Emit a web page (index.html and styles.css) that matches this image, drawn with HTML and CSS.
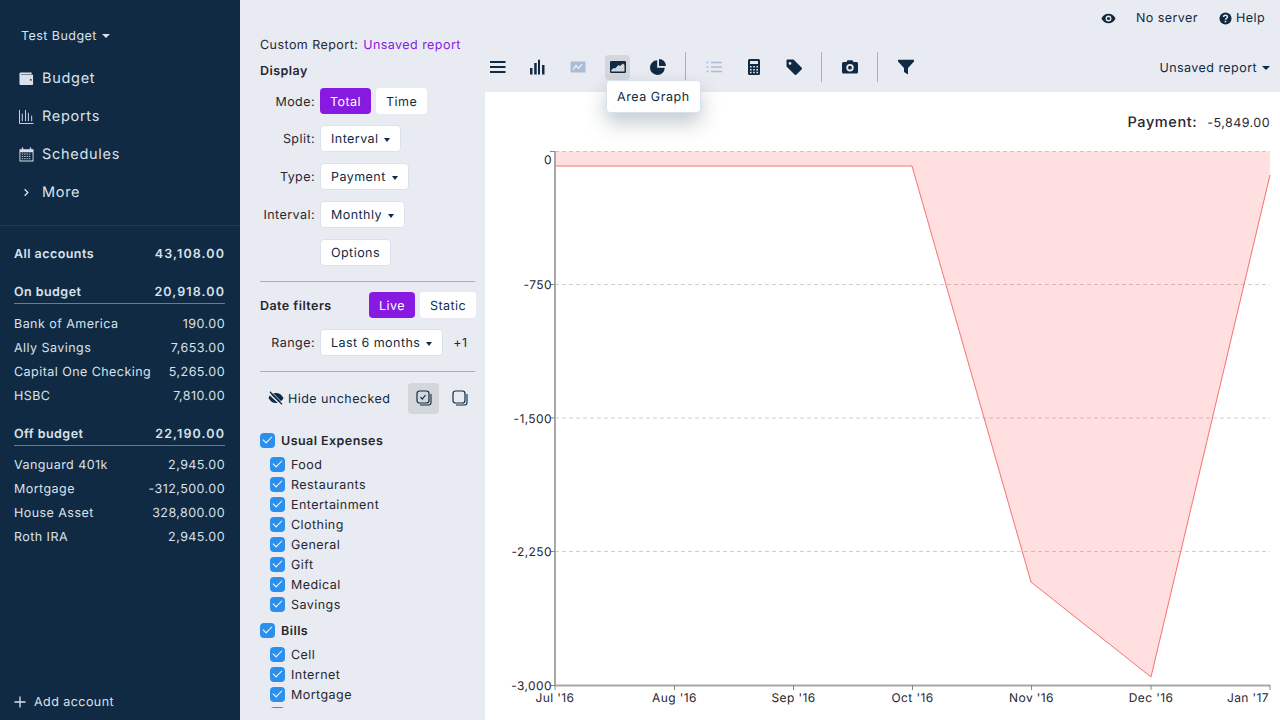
FILE: index.html
```html
<!DOCTYPE html>
<html lang="en">
<head>
    <meta charset="UTF-8">
    <title>Custom Report</title>
    <link rel="stylesheet" href="styles.css">
</head>
<body>

<div class="app">
    <!-- Sidebar -->
    <aside class="sidebar">
        <div class="budget-name">Test Budget <span class="caret caret-light"></span></div>
        <nav class="nav">
            <div class="nav-item">
                <svg class="nav-icon" viewBox="0 0 16 16"><path fill="currentColor" d="M2 1.500h11.500v2H2.200v.5H15v10.200a.8.8 0 0 1-.8.8H1.800A1.300 1.300 0 0 1 .5 13.700V3A1.500 1.500 0 0 1 2 1.500z"/><circle cx="12.600" cy="9.400" r="1" fill="#102a43"/></svg>
                Budget
            </div>
            <div class="nav-item">
                <svg class="nav-icon" viewBox="0 0 16 16"><path fill="none" stroke="currentColor" d="M.5 1v14.500h15M3.500 5v8M7 1v12M10 4v9M13.500 7v6"/></svg>
                Reports
            </div>
            <div class="nav-item">
                <svg class="nav-icon" viewBox="0 0 16 16"><path fill="currentColor" fill-rule="evenodd" d="M3 .5h1.500v2h7v-2H13v2h2.500v13H.5v-13H3zM1.500 5.500v9h13v-9z"/><path fill="none" stroke="currentColor" stroke-dasharray="1.500 1" d="M3 7.500h10M3 10h10M3 12.500h10"/></svg>
                Schedules
            </div>
            <div class="nav-item">
                <svg class="nav-icon" viewBox="0 0 16 16"><path fill="none" stroke="currentColor" stroke-width="1.400" d="M6 4.500 9.500 8 6 11.500"/></svg>
                More
            </div>
        </nav>
        <div class="accounts">
            <div class="account-row account-all"><span>All accounts</span><span class="account-sum">43,108.00</span></div>
            <div class="account-row account-head"><span>On budget</span><span class="account-sum">20,918.00</span></div>
            <div class="account-row"><span>Bank of America</span><span>190.00</span></div>
            <div class="account-row"><span>Ally Savings</span><span>7,653.00</span></div>
            <div class="account-row"><span>Capital One Checking</span><span>5,265.00</span></div>
            <div class="account-row"><span>HSBC</span><span>7,810.00</span></div>
            <div class="account-row account-head account-off"><span>Off budget</span><span class="account-sum">22,190.00</span></div>
            <div class="account-row"><span>Vanguard 401k</span><span>2,945.00</span></div>
            <div class="account-row"><span>Mortgage</span><span>-312,500.00</span></div>
            <div class="account-row"><span>House Asset</span><span>328,800.00</span></div>
            <div class="account-row"><span>Roth IRA</span><span>2,945.00</span></div>
        </div>
        <div class="add-account">
            <svg class="add-icon" viewBox="0 0 12 12"><path fill="none" stroke="currentColor" stroke-width="1.300" d="M6 .5v11M.5 6h11"/></svg>
            Add account
        </div>
    </aside>

    <main class="main">
        <!-- Top bar -->
        <header class="topbar">
            <svg class="top-icon eye-icon" viewBox="0 0 16 12"><path fill="currentColor" fill-rule="evenodd" d="M8 .8c3.400 0 6.200 2 7.700 5.200C14.200 9.200 11.400 11.200 8 11.200S1.800 9.200.3 6C1.800 2.800 4.600.8 8 .8zM8 2.800a3.200 3.200 0 1 0 0 6.400 3.200 3.200 0 0 0 0-6.400z"/><circle cx="8" cy="6" r="1.700" fill="currentColor"/></svg>
            <span class="top-text server-text">No server</span>
            <svg class="top-icon help-icon" viewBox="0 0 14 14"><circle cx="7" cy="7" r="6.500" fill="currentColor"/><path fill="none" stroke="#e8ebf1" stroke-width="1.600" d="M4.900 5.400c0-1.300 1-2 2.100-2s2.100.7 2.100 1.900c0 1.600-2.100 1.500-2.100 3.100"/><rect x="6.100" y="9.400" width="1.700" height="1.700" fill="#e8ebf1"/></svg>
            <span class="top-text">Help</span>
        </header>

        <div class="content">
            <!-- Filters panel -->
            <section class="panel">
                <div class="report-title">Custom Report: <span class="report-name">Unsaved report</span></div>
                <div class="section-title">Display</div>

                <div class="field field-mode">
                    <label class="field-label">Mode:</label>
                    <button class="btn btn-primary">Total</button>
                    <button class="btn btn-plain">Time</button>
                </div>
                <div class="field">
                    <label class="field-label">Split:</label>
                    <button class="btn btn-select">Interval <span class="caret"></span></button>
                </div>
                <div class="field">
                    <label class="field-label">Type:</label>
                    <button class="btn btn-select">Payment <span class="caret"></span></button>
                </div>
                <div class="field">
                    <label class="field-label">Interval:</label>
                    <button class="btn btn-select">Monthly <span class="caret"></span></button>
                </div>
                <div class="field">
                    <label class="field-label"></label>
                    <button class="btn btn-select">Options</button>
                </div>

                <hr class="panel-rule rule-display">

                <div class="date-head">
                    <span class="date-title">Date filters</span>
                    <button class="btn btn-primary btn-live">Live</button>
                    <button class="btn btn-plain">Static</button>
                </div>
                <div class="field range-field">
                    <label class="field-label">Range:</label>
                    <button class="btn btn-select">Last 6 months <span class="caret"></span></button>
                    <span class="range-step">+1</span>
                </div>

                <hr class="panel-rule rule-date">

                <div class="check-tools">
                    <svg class="hide-icon" viewBox="0 0 16 14"><path fill="currentColor" d="M8 2c3.200 0 6 1.900 7.500 5-1 2-2.400 3.500-4.300 4.300L3 3.600C4.400 2.600 6.100 2 8 2zM1.800 4.500l8 7.400c-.6.100-1.200.1-1.800.1-3.200 0-6-1.900-7.500-5 .3-.9.800-1.700 1.300-2.500z"/><path stroke="currentColor" stroke-width="1.400" d="M2 .8l12 12.400"/><path stroke="#e8ebf1" stroke-width=".8" d="M3.300.5l12 12.400"/></svg>
                    <span class="hide-text">Hide unchecked</span>
                    <span class="tool-btn tool-active">
                        <svg viewBox="0 0 16 16"><path fill="none" stroke="currentColor" stroke-width="1.100" d="M15 4v8.500a2.500 2.500 0 0 1-2.500 2.500H4"/><rect x="1" y="1" width="12" height="12" rx="2.500" fill="none" stroke="currentColor" stroke-width="1.200"/><path fill="none" stroke="currentColor" stroke-width="1.200" d="M4.500 7.200 6.300 9l3.200-4"/></svg>
                    </span>
                    <span class="tool-btn">
                        <svg viewBox="0 0 16 16"><path fill="none" stroke="currentColor" stroke-width="1.100" d="M15 4v8.500a2.500 2.500 0 0 1-2.500 2.500H4"/><rect x="1" y="1" width="12" height="12" rx="2.500" fill="none" stroke="currentColor" stroke-width="1.200"/></svg>
                    </span>
                </div>

                <div class="check-group">
                    <div class="check-row check-parent"><span class="check"></span>Usual Expenses</div>
                    <div class="check-row"><span class="check"></span>Food</div>
                    <div class="check-row"><span class="check"></span>Restaurants</div>
                    <div class="check-row"><span class="check"></span>Entertainment</div>
                    <div class="check-row"><span class="check"></span>Clothing</div>
                    <div class="check-row"><span class="check"></span>General</div>
                    <div class="check-row"><span class="check"></span>Gift</div>
                    <div class="check-row"><span class="check"></span>Medical</div>
                    <div class="check-row"><span class="check"></span>Savings</div>
                </div>
                <div class="check-group">
                    <div class="check-row check-parent"><span class="check"></span>Bills</div>
                    <div class="check-row"><span class="check"></span>Cell</div>
                    <div class="check-row"><span class="check"></span>Internet</div>
                    <div class="check-row"><span class="check"></span>Mortgage</div>
                    <div class="check-row"><span class="check"></span></div>
                </div>
            </section>

            <section class="report">
                <!-- Toolbar -->
                <div class="toolbar">
                    <span class="tb-btn">
                        <svg viewBox="0 0 16 16"><path fill="none" stroke="currentColor" stroke-width="1.800" d="M0 3h15.500M0 8h15.500M0 13h15.500"/></svg>
                    </span>
                    <span class="tb-btn">
                        <svg viewBox="0 0 16 16"><path fill="currentColor" d="M0 9h2.500v6.500H0zM4.200 4h2.500v11.500H4.200zM8 .8h2v14.700H8zM12 6h2.500v9.500H12z"/></svg>
                    </span>
                    <span class="tb-btn tb-off">
                        <svg viewBox="0 0 16 16"><path fill="currentColor" d="M1.500 2.500h13a1 1 0 0 1 1 1v10h-14a1 1 0 0 1-1-1v-9a1 1 0 0 1 1-1z"/><path fill="none" stroke="#e8ebf1" stroke-width="1.400" d="M3 10.500 6 6.500l2.500 3 3.500-4.500"/></svg>
                    </span>
                    <span class="tb-btn tb-active">
                        <svg viewBox="0 0 16 16"><path fill="currentColor" fill-rule="evenodd" d="M1.300 2h13.400A1.300 1.300 0 0 1 16 3.300v9.400a1.300 1.300 0 0 1-1.300 1.300H1.300A1.300 1.300 0 0 1 0 12.700V3.300A1.300 1.300 0 0 1 1.300 2zM1.500 12.500h13V6l-1.500-1.500-3 2.500-1.500-1-3.500 3.500-1.500-.5-2.500 2.500z"/></svg>
                    </span>
                    <span class="tb-btn">
                        <svg viewBox="0 0 16 16"><path fill="currentColor" d="M7.200 1.200v7.600h7.600A7.400 7.400 0 1 1 7.200 1.200z"/><path fill="currentColor" d="M9 0a7 7 0 0 1 7 7H9z"/></svg>
                    </span>
                    <span class="tb-sep"></span>
                    <span class="tb-btn tb-off">
                        <svg viewBox="0 0 16 16"><path fill="none" stroke="currentColor" stroke-width="1.500" d="M5 3.500h11M5 8h11M5 12.500h11M.5 3.500h2M.5 8h2M.5 12.500h2"/></svg>
                    </span>
                    <span class="tb-btn tb-wide">
                        <svg viewBox="0 0 16 16"><path fill="currentColor" fill-rule="evenodd" d="M3.500 0h9A1.500 1.500 0 0 1 14 1.500v13a1.500 1.500 0 0 1-1.500 1.500h-9A1.500 1.500 0 0 1 2 14.500v-13A1.500 1.500 0 0 1 3.500 0zM4 2v3h8V2zM4 7v1.600h1.600V7zM7.200 7v1.600h1.600V7zM10.400 7v1.600H12V7zM4 10v1.600h1.600V10zM7.200 10v1.600h1.600V10zM10.400 10v1.600H12V10zM4 12.800v1.400h1.600v-1.400zM7.200 12.800v1.400h1.600v-1.400zM10.400 12.800v1.400H12v-1.400z"/></svg>
                    </span>
                    <span class="tb-btn">
                        <svg viewBox="0 0 16 16"><path fill="currentColor" fill-rule="evenodd" d="M1.500 .5h6l8 8a1.400 1.400 0 0 1 0 2l-5 5a1.400 1.400 0 0 1-2 0l-8-8v-6a1 1 0 0 1 1-1zM4 3a1.400 1.400 0 1 0 0 2.800A1.400 1.400 0 0 0 4 3z"/></svg>
                    </span>
                    <span class="tb-sep"></span>
                    <span class="tb-btn">
                        <svg viewBox="0 0 16 16"><path fill="currentColor" fill-rule="evenodd" d="M1.500 3H4.500l1-1.800h5L11.500 3h3A1.500 1.500 0 0 1 16 4.500v8.500a1.500 1.500 0 0 1-1.500 1.500h-13A1.500 1.500 0 0 1 0 13V4.500A1.500 1.500 0 0 1 1.500 3zM8 5a3.700 3.700 0 1 0 0 7.400A3.700 3.700 0 0 0 8 5zM8 6.800a1.900 1.900 0 1 1 0 3.800 1.900 1.900 0 0 1 0-3.800z"/></svg>
                    </span>
                    <span class="tb-sep"></span>
                    <span class="tb-btn">
                        <svg viewBox="0 0 16 16"><path fill="currentColor" d="M0 .8h16v1.700L10 9v6.500L6 13V9L0 2.500z"/></svg>
                    </span>
                    <span class="saved-name">Unsaved report <span class="caret"></span></span>
                    <div class="tooltip">Area Graph</div>
                </div>

                <!-- Chart -->
                <div class="chart-card">
                    <div class="chart-total"><span class="total-label">Payment:</span><span class="total-value">-5,849.00</span></div>
                    <svg class="chart" viewBox="0 0 795 628" width="795" height="628">
                        <g class="grid">
                            <line x1="70" y1="59.500" x2="785" y2="59.500"/>
                            <line x1="70" y1="192.500" x2="785" y2="192.500"/>
                            <line x1="70" y1="326" x2="785" y2="326"/>
                            <line x1="70" y1="459.500" x2="785" y2="459.500"/>
                        </g>
                        <path class="area" d="M70 59.500H785V83L666 585 546 490 427 74H70z"/>
                        <path class="area-line" d="M70 74H427L546 490 666 585 785 83"/>
                        <path class="axis" d="M70 59V593.500H785"/>
                        <path class="tick" d="M70 593v5M189.500 593v5M308.500 593v5M427.500 593v5M546.500 593v5M666 593v5M785 593v5M65 593.500h5M65 459.500h5M65 326h5M65 192.500h5M65 59.500h5"/>
                        <g class="y-labels">
                            <text x="67" y="72">0</text>
                            <text x="67" y="197">-750</text>
                            <text x="67" y="331">-1,500</text>
                            <text x="67" y="464">-2,250</text>
                            <text x="67" y="598">-3,000</text>
                        </g>
                        <g class="x-labels">
                            <text x="70" y="610">Jul '16</text>
                            <text x="189.500" y="610">Aug '16</text>
                            <text x="308.500" y="610">Sep '16</text>
                            <text x="427.500" y="610">Oct '16</text>
                            <text x="546.500" y="610">Nov '16</text>
                            <text x="666" y="610">Dec '16</text>
                            <text x="763" y="610">Jan '17</text>
                        </g>
                    </svg>
                </div>
            </section>
        </div>
    </main>
</div>

</body>
</html>
```

FILE: styles.css
```css
* {
    box-sizing: border-box;
}

body {
    margin: 0;
    font-family: Inter, "Noto Sans", sans-serif;
    font-size: 12.500px;
    letter-spacing: 0.45px;
    text-rendering: geometricPrecision;
    color: #272630;
    background-color: #e8ebf1;
    overflow: hidden;
}

.app {
    display: flex;
    width: 1280px;
    height: 720px;
    overflow: hidden;
}

/* Carets */
.caret {
    display: inline-block;
    width: 0;
    height: 0;
    margin-left: 1px;
    vertical-align: 2px;
    border-left: 4.500px solid transparent;
    border-right: 4.500px solid transparent;
    border-top: 4.500px solid #102a43;
}

.caret-light {
    border-top-color: #d9e2ec;
}

/* Sidebar */
.sidebar {
    display: flex;
    flex-direction: column;
    flex: 0 0 240px;
    height: 720px;
    background-color: #102a43;
    color: #d9e2ec;
}

.budget-name {
    height: 58px;
    padding: 29px 0 0 21px;
    line-height: 16px;
}

.nav-item {
    display: flex;
    align-items: center;
    height: 38px;
    padding: 2px 0 0 19px;
    font-size: 14.500px;
    letter-spacing: 0.7px;
}

.nav-icon {
    width: 15px;
    height: 15px;
    margin-right: 8px;
}

.nav {
    padding-bottom: 15px;
    border-bottom: 1px solid #243b53;
}

.accounts {
    flex: 1;
    padding: 16px 15px 0 14px;
}

.account-row {
    display: flex;
    justify-content: space-between;
    height: 24px;
    line-height: 26px;
}

.account-all {
    margin-bottom: 14px;
    font-weight: 600;
}

.account-head {
    margin-bottom: 8px;
    border-bottom: 1px solid #627d98;
    font-weight: 600;
}

.account-sum {
    letter-spacing: 1.100px;
}

.account-off {
    margin-top: 14px;
    margin-bottom: 7px;
}

.add-account {
    display: flex;
    align-items: center;
    height: 38px;
    padding: 2px 0 0 14px;
}

.add-icon {
    width: 12px;
    height: 12px;
    margin-right: 8px;
}

/* Main area */
.main {
    display: flex;
    flex-direction: column;
    flex: 1;
    min-width: 0;
}

.topbar {
    display: flex;
    align-items: center;
    justify-content: flex-end;
    flex: 0 0 36px;
    padding-right: 15px;
    color: #102a43;
}

.top-text {
    padding-top: 1px;
}

.top-icon {
    display: block;
}

.eye-icon {
    width: 15px;
    height: 11px;
    margin-right: 20px;
}

.help-icon {
    width: 13px;
    height: 13px;
    margin-right: 4px;
}

.server-text {
    margin-right: 21px;
}

.content {
    display: flex;
    flex: 1;
    min-height: 0;
}

/* Filters panel, its list is cut at 708 */
.panel {
    flex: 0 0 245px;
    height: 672px;
    padding: 0 10px 0 20px;
    overflow: hidden;
}

.report-title {
    height: 18px;
    line-height: 19px;
}

.report-name {
    margin-left: 1px;
    color: #8719e0;
}

.section-title {
    height: 28px;
    line-height: 35px;
    font-weight: 600;
}

.field {
    display: flex;
    align-items: center;
    height: 38px;
}

.field-mode {
    margin-bottom: -1px;
}

.field-label {
    flex: 0 0 55px;
    margin-right: 5px;
    padding-top: 2px;
    text-align: right;
}

.btn {
    height: 27px;
    padding: 2px 10px 0;
    border: 1px solid #d9e2ec;
    border-radius: 4px;
    background-color: #fff;
    color: #102a43;
    font-family: inherit;
    font-size: 12.500px;
    letter-spacing: 0.45px;
    text-rendering: geometricPrecision;
    white-space: nowrap;
}

.btn-plain {
    height: 26px;
    margin-left: 5px;
    border: none;
}

.btn-primary {
    height: 26px;
    border: none;
    background-color: #8719e0;
    color: #fff;
}

.btn-select .caret {
    margin-left: 2px;
    vertical-align: 1px;
    border-width: 4px 3.500px 0;
}

.panel-rule {
    margin: 0;
    border: none;
    border-top: 1px solid #9fb3c8;
}

.rule-display {
    margin-top: 10px;
}

.date-head {
    display: flex;
    align-items: center;
    height: 46px;
}

.date-title {
    flex: 0 0 109px;
    padding-top: 2px;
    font-weight: 600;
}

.range-field {
    height: 28px;
    margin-bottom: 15px;
}

.range-step {
    margin-left: 10px;
    padding-top: 2px;
}

.check-tools {
    display: flex;
    align-items: center;
    height: 32px;
    margin-top: 10px;
    color: #102a43;
}

.hide-icon {
    flex: 0 0 16px;
    height: 14px;
    margin-left: 8px;
    margin-right: 4px;
}

.hide-text {
    flex: 0 0 120px;
    padding-top: 2px;
    white-space: nowrap;
}

.tool-btn {
    display: flex;
    align-items: center;
    justify-content: center;
    flex: 0 0 31px;
    height: 31px;
    margin-right: 5px;
    border-radius: 4px;
}

.tool-btn svg {
    width: 16px;
    height: 16px;
}

.tool-active {
    background-color: #d3d7dc;
}

.check-group {
    margin-top: 14px;
}

.check-group + .check-group {
    margin-top: 4px;
}

.check-row {
    display: flex;
    align-items: center;
    height: 20px;
    padding: 2px 0 0 10px;
}

.check-parent {
    height: 24px;
    margin-bottom: 2px;
    padding-left: 0;
    font-weight: 600;
}

/* Blue box with a white tick */
.check {
    position: relative;
    flex: 0 0 15px;
    width: 15px;
    height: 15px;
    margin-right: 6px;
    margin-bottom: 2px;
    border-radius: 4px;
    background-color: #2b8fed;
}

.check::after {
    content: "";
    position: absolute;
    left: 3px;
    top: 3.500px;
    width: 8px;
    height: 4px;
    border-left: 1.600px solid #fff;
    border-bottom: 1.600px solid #fff;
    transform: rotate(-45deg);
}

/* Report column */
.report {
    display: flex;
    flex-direction: column;
    flex: 1;
    min-width: 0;
}

.toolbar {
    position: relative;
    display: flex;
    align-items: center;
    flex: 0 0 56px;
    padding: 6px 10px 0 0;
    color: #102a43;
}

.tb-btn {
    display: flex;
    align-items: center;
    justify-content: center;
    width: 25px;
    height: 25px;
    margin-right: 15px;
    border-radius: 4px;
}

.tb-btn svg {
    width: 16px;
    height: 16px;
}

.tb-off {
    color: #a9bdd6;
}

.tb-active {
    background-color: #d3d7dc;
}

.tb-sep {
    width: 1px;
    height: 30px;
    margin-right: 15px;
    background-color: #9fb3c8;
}

.saved-name {
    margin-left: auto;
    padding-top: 2px;
    white-space: nowrap;
}

/* Hover tooltip under the area graph button */
.tooltip {
    position: absolute;
    left: 121px;
    top: 44px;
    z-index: 2;
    padding: 0 10px;
    height: 33px;
    line-height: 33px;
    letter-spacing: 0.55px;
    border: 1px solid #d9e2ec;
    border-radius: 4px;
    background-color: #fff;
    box-shadow: 0 10px 20px rgba(16, 42, 67, 0.25);
    color: #102a43;
    white-space: nowrap;
}

/* Chart */
.chart-card {
    position: relative;
    flex: 1;
    background-color: #fff;
}

.chart-total {
    position: absolute;
    top: 22px;
    right: 10px;
    display: flex;
    align-items: baseline;
}

.total-label {
    margin-right: 10px;
    font-size: 14.500px;
    letter-spacing: 0.6px;
    font-weight: 500;
}

.chart {
    display: block;
}

.chart text {
    font-size: 12px;
    letter-spacing: 0.4px;
    fill: #272630;
}

.grid line {
    stroke: #cfcfcf;
    stroke-dasharray: 4 3;
}

.area {
    fill: #fe0000;
    fill-opacity: 0.125;
}

.area-line {
    fill: none;
    stroke: #f97070;
}

.axis {
    fill: none;
    stroke: #a8a8a8;
    stroke-width: 2;
}

.tick {
    fill: none;
    stroke: #888;
}

.y-labels text {
    text-anchor: end;
}

.x-labels text {
    text-anchor: middle;
}
```
